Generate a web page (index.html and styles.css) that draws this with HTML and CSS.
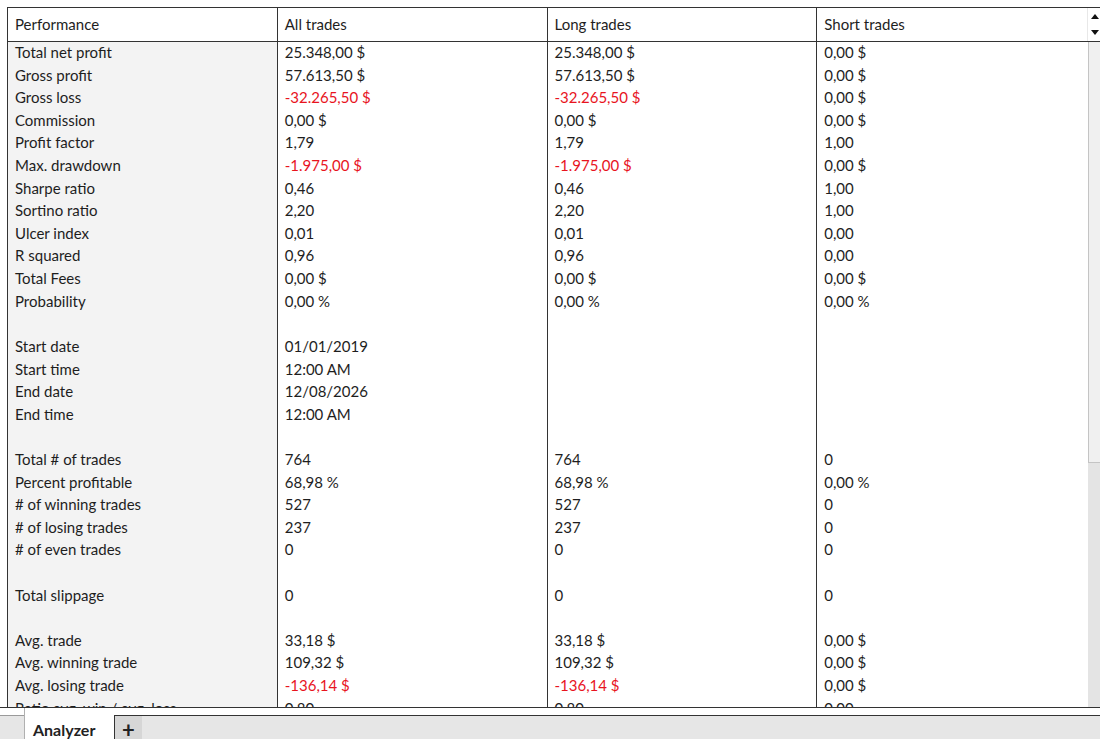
FILE: index.html
```html
<!DOCTYPE html>
<html>
<head>
<meta charset="utf-8">
<link rel="stylesheet" href="styles.css">
</head>
<body>
<div class="frame">
  <div class="table">
    <div class="head">
      <div class="hcell first">Performance</div>
      <div class="hcell">All trades</div>
      <div class="hcell">Long trades</div>
      <div class="hcell last">Short trades</div>
      <div class="sorter">
        <svg width="10" height="24" viewBox="0 0 10 24"><path d="M1 6 L5 1 L9 6 Z" fill="#111"/><path d="M1 17 L5 22 L9 17 Z" fill="#111"/></svg>
      </div>
    </div>
    <div class="body">
      <div class="col labels">
        <div class="cell">Total net profit</div>
        <div class="cell">Gross profit</div>
        <div class="cell">Gross loss</div>
        <div class="cell">Commission</div>
        <div class="cell">Profit factor</div>
        <div class="cell">Max. drawdown</div>
        <div class="cell">Sharpe ratio</div>
        <div class="cell">Sortino ratio</div>
        <div class="cell">Ulcer index</div>
        <div class="cell">R squared</div>
        <div class="cell">Total Fees</div>
        <div class="cell">Probability</div>
        <div class="cell"></div>
        <div class="cell">Start date</div>
        <div class="cell">Start time</div>
        <div class="cell">End date</div>
        <div class="cell">End time</div>
        <div class="cell"></div>
        <div class="cell">Total # of trades</div>
        <div class="cell">Percent profitable</div>
        <div class="cell"># of winning trades</div>
        <div class="cell"># of losing trades</div>
        <div class="cell"># of even trades</div>
        <div class="cell"></div>
        <div class="cell">Total slippage</div>
        <div class="cell"></div>
        <div class="cell">Avg. trade</div>
        <div class="cell">Avg. winning trade</div>
        <div class="cell">Avg. losing trade</div>
        <div class="cell">Ratio avg. win / avg. loss</div>
      </div>
      <div class="col">
        <div class="cell">25.348,00 $</div>
        <div class="cell">57.613,50 $</div>
        <div class="cell neg">-32.265,50 $</div>
        <div class="cell">0,00 $</div>
        <div class="cell">1,79</div>
        <div class="cell neg">-1.975,00 $</div>
        <div class="cell">0,46</div>
        <div class="cell">2,20</div>
        <div class="cell">0,01</div>
        <div class="cell">0,96</div>
        <div class="cell">0,00 $</div>
        <div class="cell">0,00 %</div>
        <div class="cell"></div>
        <div class="cell">01/01/2019</div>
        <div class="cell">12:00 AM</div>
        <div class="cell">12/08/2026</div>
        <div class="cell">12:00 AM</div>
        <div class="cell"></div>
        <div class="cell">764</div>
        <div class="cell">68,98 %</div>
        <div class="cell">527</div>
        <div class="cell">237</div>
        <div class="cell">0</div>
        <div class="cell"></div>
        <div class="cell">0</div>
        <div class="cell"></div>
        <div class="cell">33,18 $</div>
        <div class="cell">109,32 $</div>
        <div class="cell neg">-136,14 $</div>
        <div class="cell">0,80</div>
      </div>
      <div class="col">
        <div class="cell">25.348,00 $</div>
        <div class="cell">57.613,50 $</div>
        <div class="cell neg">-32.265,50 $</div>
        <div class="cell">0,00 $</div>
        <div class="cell">1,79</div>
        <div class="cell neg">-1.975,00 $</div>
        <div class="cell">0,46</div>
        <div class="cell">2,20</div>
        <div class="cell">0,01</div>
        <div class="cell">0,96</div>
        <div class="cell">0,00 $</div>
        <div class="cell">0,00 %</div>
        <div class="cell"></div>
        <div class="cell"></div>
        <div class="cell"></div>
        <div class="cell"></div>
        <div class="cell"></div>
        <div class="cell"></div>
        <div class="cell">764</div>
        <div class="cell">68,98 %</div>
        <div class="cell">527</div>
        <div class="cell">237</div>
        <div class="cell">0</div>
        <div class="cell"></div>
        <div class="cell">0</div>
        <div class="cell"></div>
        <div class="cell">33,18 $</div>
        <div class="cell">109,32 $</div>
        <div class="cell neg">-136,14 $</div>
        <div class="cell">0,80</div>
      </div>
      <div class="col last">
        <div class="cell">0,00 $</div>
        <div class="cell">0,00 $</div>
        <div class="cell">0,00 $</div>
        <div class="cell">0,00 $</div>
        <div class="cell">1,00</div>
        <div class="cell">0,00 $</div>
        <div class="cell">1,00</div>
        <div class="cell">1,00</div>
        <div class="cell">0,00</div>
        <div class="cell">0,00</div>
        <div class="cell">0,00 $</div>
        <div class="cell">0,00 %</div>
        <div class="cell"></div>
        <div class="cell"></div>
        <div class="cell"></div>
        <div class="cell"></div>
        <div class="cell"></div>
        <div class="cell"></div>
        <div class="cell">0</div>
        <div class="cell">0,00 %</div>
        <div class="cell">0</div>
        <div class="cell">0</div>
        <div class="cell">0</div>
        <div class="cell"></div>
        <div class="cell">0</div>
        <div class="cell"></div>
        <div class="cell">0,00 $</div>
        <div class="cell">0,00 $</div>
        <div class="cell">0,00 $</div>
        <div class="cell">0,00</div>
      </div>
      <div class="scrollbar">
        <div class="thumb"></div>
      </div>
    </div>
  </div>
  <div class="tabbar">
    <div class="tab-spacer"></div>
    <div class="tab active">Analyzer</div>
    <div class="tab add">+</div>
    <div class="tab-rest"></div>
  </div>
</div>
</body>
</html>
```

FILE: styles.css
```css
html, body {
  margin: 0;
  padding: 0;
  background: #ffffff;
}
body {
  font-family: Lato, "Noto Sans", sans-serif;
  font-size: 15px;
  color: #1e1e1e;
  width: 1100px;
  height: 739px;
  overflow: hidden;
}
.frame {
  display: flex;
  flex-direction: column;
  height: 739px;
  padding-top: 7px;
  box-sizing: border-box;
}
.table {
  margin-left: 7px;
  height: 700px;
  flex: none;
  border-top: 1px solid #333;
  border-left: 1px solid #333;
  box-sizing: border-box;
  display: flex;
  flex-direction: column;
  overflow: hidden;
}
.head {
  display: flex;
  height: 34px;
  flex: none;
  border-bottom: 1px solid #333;
  box-sizing: border-box;
}
.hcell {
  width: 270px;
  box-sizing: border-box;
  border-right: 1px solid #333;
  padding-left: 7px;
  padding-bottom: 2px;
  display: flex;
  align-items: center;
}
.hcell.last {
  width: 271px;
  border-right: 1px solid #e8e8e8;
}
.sorter {
  width: 12px;
  display: flex;
  align-items: center;
  justify-content: flex-end;
}
.body {
  display: flex;
  flex: 1;
  min-height: 0;
}
.col {
  width: 270px;
  box-sizing: border-box;
  border-right: 1px solid #333;
  display: flex;
  flex-direction: column;
  overflow: hidden;
}
.col.labels {
  background: #f3f3f3;
}
.col.last {
  width: 271px;
  border-right: none;
}
.cell {
  height: 22.62px;
  flex: none;
  line-height: 21px;
  padding-left: 7px;
  white-space: nowrap;
}
.neg { color: #e8141e; }
.scrollbar {
  width: 12px;
  background: #e4e4e4;
  display: flex;
  flex-direction: column;
}
.thumb {
  height: 420px;
  background: #f0f0f0;
  border-left: 1px solid #c4c4c4;
  border-bottom: 1px solid #c4c4c4;
}
.tabbar {
  display: flex;
  flex: 1;
  border-top: 1px solid #333;
  background: #ffffff;
}
.tab-spacer,
.tab.add,
.tab-rest {
  margin-top: 7px;
}
.tab-spacer {
  width: 24px;
  background: #e6e6e6;
  border-top: 1px solid #9a9a9a;
}
.tab {
  display: flex;
  align-items: center;
}
.tab.active {
  width: 90px;
  padding-top: 7px;
  padding-left: 8px;
  background: #ffffff;
  border-left: 1px solid #b0b0b0;
  font-weight: 700;
  font-size: 16px;
  color: #222;
  box-sizing: border-box;
}
.tab.add {
  width: 28px;
  justify-content: center;
  background: #d6d6d6;
  border-left: 1px solid #333;
  border-top: 1px solid #333;
  font-size: 22px;
  font-weight: 700;
  box-sizing: border-box;
  color: #222;
}
.tab-rest {
  flex: 1;
  background: #e6e6e6;
  border-top: 1px solid #333;
}
```
